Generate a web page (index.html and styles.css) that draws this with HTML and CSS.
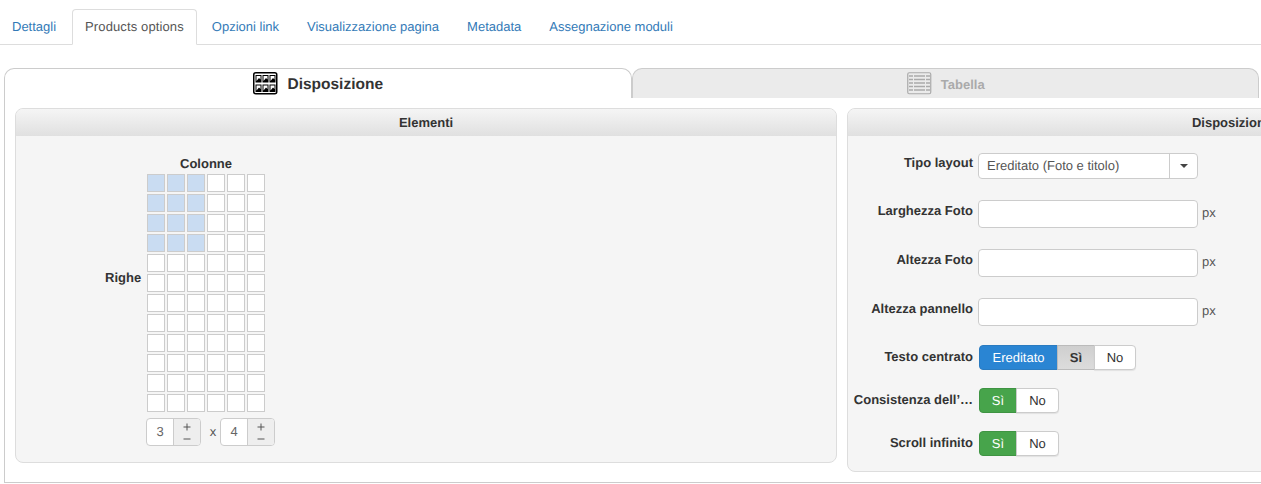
FILE: index.html
```html
<!DOCTYPE html>
<html lang="it">
<head>
<meta charset="utf-8">
<title>Products options</title>
<link rel="stylesheet" href="styles.css">
</head>
<body>
<ul class="nav">
  <li><a href="#">Dettagli</a></li>
  <li class="active"><a href="#">Products options</a></li>
  <li><a href="#">Opzioni link</a></li>
  <li><a href="#">Visualizzazione pagina</a></li>
  <li><a href="#">Metadata</a></li>
  <li><a href="#">Assegnazione moduli</a></li>
</ul>
<div class="device-tabs">
  <div class="dtab dtab-on">
    <svg class="dicon" width="25" height="23" viewBox="0 0 25 23">
      <rect x="0.75" y="0.75" width="23" height="21" rx="2" fill="#fff" stroke="#000" stroke-width="1.5"/>
      <g fill="#000"><rect x="2.5" y="3" width="6" height="7.5"/><rect x="9.5" y="3" width="6" height="7.5"/><rect x="16.5" y="3" width="6" height="7.5"/><rect x="2.5" y="12.5" width="6" height="7.5"/><rect x="9.5" y="12.5" width="6" height="7.5"/><rect x="16.5" y="12.5" width="6" height="7.5"/></g>
      <g fill="#fff"><path d="M3.5 4h4v3.5L6 6 3.5 9zM10.5 4h4v3.5L13 6l-2.5 3zM17.5 4h4v3.5L20 6l-2.5 3zM3.5 13.5h4V17l-1.500-1.500L3.500 18.500zM10.5 13.500h4V17L13 15.500l-2.500 3zM17.500 13.500h4V17L20 15.500l-2.500 3z"/></g>
    </svg>
    <span>Disposizione</span>
  </div>
  <div class="dtab dtab-off">
    <svg class="dicon" width="25" height="23" viewBox="0 0 25 23">
      <rect x="0.75" y="0.75" width="23" height="21" rx="1.5" fill="none" stroke="#aaa" stroke-width="1.2"/>
      <g stroke="#aaa" stroke-width="1.6"><path d="M2 4h21M2 7.500h21M2 11h21M2 14.500h21M2 18h21"/></g>
      <g stroke="#ebebeb" stroke-width="1"><path d="M6.500 2v19M18.500 2v19"/></g>
    </svg>
    <span>Tabella</span>
  </div>
</div>
<div class="tab-body">
  <section class="panel panel-left">
    <h3 class="panel-head">Elementi</h3>
    <div class="grid-area">
      <div class="righe">Righe</div>
      <div class="grid-col">
        <div class="colonne">Colonne</div>
        <div class="cells" id="cells"></div>
        <div class="steppers">
          <div class="stepper"><span class="val">3</span><span class="pm"><svg width="8" height="18" viewBox="0 0 8 18"><path d="M0.500 4h7M4 0.500v7M0.500 16h7" fill="none" stroke="#555" stroke-width="1"/></svg></span></div>
          <span class="times">x</span>
          <div class="stepper"><span class="val">4</span><span class="pm"><svg width="8" height="18" viewBox="0 0 8 18"><path d="M0.500 4h7M4 0.500v7M0.500 16h7" fill="none" stroke="#555" stroke-width="1"/></svg></span></div>
        </div>
      </div>
    </div>
  </section>
  <section class="panel panel-right">
    <h3 class="panel-head">Disposizione</h3>
    <div class="form">
      <div class="row row-select">
        <label>Tipo layout</label>
        <div class="select"><span class="sel-text">Ereditato (Foto e titolo)</span><span class="sel-arrow"><b></b></span></div>
      </div>
      <div class="row row-input">
        <label>Larghezza Foto</label>
        <div class="input"></div><span class="unit">px</span>
      </div>
      <div class="row row-input">
        <label>Altezza Foto</label>
        <div class="input"></div><span class="unit">px</span>
      </div>
      <div class="row row-input row-last">
        <label>Altezza pannello</label>
        <div class="input"></div><span class="unit">px</span>
      </div>
      <div class="row row-btn">
        <label>Testo centrato</label>
        <div class="btns"><span class="btn blue">Ereditato</span><span class="btn pressed">Sì</span><span class="btn b-no2">No</span></div>
      </div>
      <div class="row row-btn">
        <label>Consistenza dell’…</label>
        <div class="btns"><span class="btn green">Sì</span><span class="btn b-no">No</span></div>
      </div>
      <div class="row row-btn">
        <label>Scroll infinito</label>
        <div class="btns"><span class="btn green">Sì</span><span class="btn b-no">No</span></div>
      </div>
    </div>
  </section>
</div>
<script src="cells.js"></script>
</body>
</html>
```
FILE: cells.js
```js
var host = document.getElementById('cells');
for (var r = 0; r < 12; r++) {
  for (var c = 0; c < 6; c++) {
    var d = document.createElement('span');
    d.className = (r < 4 && c < 3) ? 'cell on' : 'cell';
    host.appendChild(d);
  }
}
```
FILE: styles.css
```css
* { box-sizing: border-box; }
html, body { margin: 0; padding: 0; height: 484px; overflow: hidden; background: #fff; }
body { font-family: "Liberation Sans", Arial, sans-serif; font-size: 13px; line-height: 18px; color: #333; width: 1261px; text-rendering: geometricPrecision; }

.nav { list-style: none; margin: 0; padding: 9px 0 0; height: 45px; display: flex; border-bottom: 1px solid #ddd; }
.nav li { height: 36px; margin-right: 3px; }
.nav a { display: block; height: 36px; padding: 8px 12px; color: #337ab7; text-decoration: none; border: 1px solid transparent; border-radius: 4px 4px 0 0; margin-left: -1px; }
.nav li.active { margin-left: 1px; }
.nav li.active a { color: #555; background: #fff; border-color: #ddd #ddd #fff; letter-spacing: .12px; }

.device-tabs { display: flex; margin: 23px 2px 0 4px; height: 30px; }
.dtab { flex: 1; display: flex; align-items: center; justify-content: center; gap: 9px; font-weight: bold; border: 1px solid #ccc; border-bottom: 0; border-radius: 10px 10px 0 0; }
.dtab span { padding-top: 2px; }
.dtab-on { background: #fff; font-size: 15.5px; color: #333; }
.dtab-off { background: #ebebeb; color: #aaa; font-size: 13px; }
.dicon { display: block; margin: -1px 0 0 1px; }

.tab-body { display: flex; align-items: flex-start; gap: 10px; margin-left: 4px; padding: 10px 0 0 10px; height: 385px; width: 1700px; border-left: 1px solid #ccc; border-bottom: 1px solid #ccc; }
.panel { background: #f5f5f5; border: 1px solid #ddd; border-radius: 8px; overflow: hidden; flex: none; }
.panel-left { width: 822px; height: 355px; }
.panel-right { width: 770px; height: 364px; }
.panel-head { margin: 0; height: 27px; font-size: 13px; line-height: 27px; font-weight: bold; text-align: center; color: #333; background: linear-gradient(#f5f5f5, #e0e0e0); }

.grid-area { display: flex; justify-content: flex-start; padding: 20px 0 0 89px; }
.righe { width: 36px; margin-top: 113px; margin-right: 6px; font-weight: bold; text-align: right; flex: none; }
.grid-col { width: 130px; }
.colonne { width: 118px; height: 18px; text-align: center; font-weight: bold; margin-top: -1px; }
.cells { display: grid; grid-template-columns: repeat(6, 18px); grid-auto-rows: 18px; gap: 2px; margin-top: 1px; }
.cell { display: block; background: #fff; border: 1px solid #ccc; }
.cell.on { background: #c9dcf2; }
.steppers { display: flex; align-items: center; margin-top: 6px; margin-left: -1px; }
.stepper { display: flex; width: 55px; height: 28px; border: 1px solid #ccc; border-radius: 4px; overflow: hidden; background: #fff; }
.val { width: 27px; text-align: center; line-height: 26px; color: #666; border-right: 1px solid #ccc; }
.pm { flex: 1; background: #eee; display: flex; align-items: center; justify-content: center; }
.pm svg { display: block; }
.times { width: 19px; padding-left: 5px; text-align: center; color: #555; }

.form { padding: 17px 0 0; }
.row { display: flex; align-items: flex-start; }
.row label { width: 125px; margin-right: 5px; text-align: right; font-weight: bold; white-space: nowrap; flex: none; }
.row-select { height: 47px; }
.row-select label { padding-top: 1px; }
.row-input { height: 49px; }
.row-last { height: 47px; }
.row-input label { padding-top: 2px; }
.select { display: flex; width: 220px; height: 26px; background: #fff; border: 1px solid #ccc; border-radius: 4px; color: #555; line-height: 24px; }
.sel-text { flex: 1; padding-left: 8px; }
.sel-arrow { width: 28px; border-left: 1px solid #ccc; display: flex; align-items: center; justify-content: center; }
.sel-arrow b { width: 0; height: 0; border: 4px solid transparent; border-top-color: #444; border-bottom: 0; }
.input { width: 220px; height: 28px; background: #fff; border: 1px solid #ccc; border-radius: 4px; }
.unit { margin-left: 4px; line-height: 26px; color: #555; }
.row-btn { height: 43px; }
.row-btn label { padding-top: 3px; }
.btns { display: flex; height: 25px; margin-left: 1px; }
.btn { display: block; height: 25px; line-height: 23px; text-align: center; border: 1px solid #ccc; background: #fff; color: #333; margin-left: -1px; }
.btns .btn:first-child { margin-left: 0; border-radius: 4px 0 0 4px; }
.btns .btn:last-child { border-radius: 0 4px 4px 0; box-shadow: 0 1px 1px rgba(0,0,0,.08); }
.btn.blue { width: 79px; background: #2a85d3; border-color: #2a7bc0; color: #fff; }
.btn.pressed { width: 38px; background: linear-gradient(#cfcfcf, #dcdcdc); border-color: #bbb; font-weight: bold; }
.b-no2 { width: 42px; }
.btn.green { width: 38px; background: #47a44b; border-color: #3f9443; color: #fff; }
.b-no { width: 43px; }
```
